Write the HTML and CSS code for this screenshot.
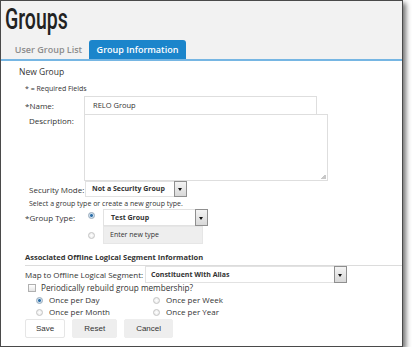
FILE: index.html
```html
<!DOCTYPE html>
<html lang="en">
<head>
    <meta charset="UTF-8">
    <title>Groups</title>
    <link rel="stylesheet" href="styles.css">
</head>
<body>
    <div class="window">
        <div class="header">
            <h1 class="title">Groups</h1>
            <div class="tabs">
                <span class="tab">User Group List</span>
                <span class="tab active">Group Information</span>
            </div>
        </div>
        <div class="rule"></div>

        <div class="content">
            <div class="subtitle">New Group</div>

            <div class="form">
                <div class="req">* = Required Fields</div>

                <div class="row name-row">
                    <span class="lbl">*Name:</span>
                    <div class="field name">RELO Group</div>
                </div>

                <div class="row desc-row">
                    <span class="lbl indent">Description:</span>
                    <div class="field desc"><span class="grip"></span></div>
                </div>

                <div class="row sec-row">
                    <span class="lbl indent">Security Mode:</span>
                    <div class="select sec"><span class="val">Not a Security Group</span><span class="arrow"></span></div>
                </div>
                <div class="hint">Select a group type or create a new group type.</div>

                <div class="row type-row">
                    <span class="lbl">*Group Type:</span>
                    <span class="radio on"></span>
                    <div class="select type"><span class="val">Test Group</span><span class="arrow"></span></div>
                </div>
                <div class="row new-row">
                    <span class="lbl"></span>
                    <span class="radio"></span>
                    <div class="field newtype">Enter new type</div>
                </div>

                <div class="section">Associated Offline Logical Segment Information</div>

                <div class="row map-row">
                    <span class="map-lbl">Map to Offline Logical Segment:</span>
                    <div class="select map"><span class="val">Constituent With Alias</span><span class="arrow"></span></div>
                </div>

                <div class="check-row">
                    <span class="box"></span>
                    <span>Periodically rebuild group membership?</span>
                </div>

                <div class="freq">
                    <div class="opt"><span class="radio on"></span>Once per Day</div>
                    <div class="opt"><span class="radio"></span>Once per Week</div>
                    <div class="opt"><span class="radio"></span>Once per Month</div>
                    <div class="opt"><span class="radio"></span>Once per Year</div>
                </div>

                <div class="buttons">
                    <button type="button" class="btn save">Save</button>
                    <button type="button" class="btn">Reset</button>
                    <button type="button" class="btn">Cancel</button>
                </div>
            </div>
        </div>
    </div>
</body>
</html>
```

FILE: styles.css
```css
body {
    margin: 0;
    background: #fff;
    font-family: "Open Sans", sans-serif;
    color: #333;
}

.window {
    width: 401px;
    height: 345px;
    border: 1px solid #4a4a4a;
    background: #fff;
    box-shadow: 3px 3px 5px rgba(0, 0, 0, 0.55);
    overflow: hidden;
    white-space: nowrap;
}

.header {
    background: #f2f2f2;
    height: 58px;
    display: flex;
    flex-direction: column;
    justify-content: space-between;
}

.title {
    margin: 0;
    padding: 3px 0 0 6px;
    font-family: Roboto, sans-serif;
    font-weight: 500;
    font-size: 30px;
    line-height: 30px;
    color: #222;
    transform: scaleX(0.65);
    transform-origin: left;
}

.tabs {
    display: flex;
    padding-left: 7px;
    height: 19px;
}

.tab {
    width: 81px;
    text-align: center;
    font-size: 9px;
    font-weight: 600;
    line-height: 19px;
    color: #8c8c8c;
}

.tab.active {
    width: 97px;
    background: #1b85cb;
    color: #fff;
    border-radius: 3px 3px 0 0;
}

.rule {
    height: 2px;
    background: #76b6e3;
}

.content {
    padding: 5px 0 0 18px;
}

.subtitle {
    font-size: 8.5px;
    line-height: 12px;
}

.form {
    padding-left: 6px;
}

.req {
    margin-top: 6px;
    font-size: 7px;
    line-height: 10px;
}

.row {
    display: flex;
    align-items: center;
}

.lbl {
    width: 59px;
    flex: none;
    font-size: 8px;
}

.lbl.indent {
    padding-left: 4px;
    width: 55px;
}

.field {
    box-sizing: border-box;
    border: 1px solid #dedede;
    background: #fff;
    font-size: 7.5px;
    padding-left: 8px;
}

.name-row {
    margin-top: 2px;
}

.name {
    width: 233px;
    height: 19px;
    line-height: 17px;
}

.desc-row {
    align-items: flex-start;
    margin-top: -1px;
}

.desc-row .lbl {
    padding-top: 1px;
}

.desc {
    width: 244px;
    height: 67px;
    position: relative;
}

.grip {
    position: absolute;
    right: 1px;
    bottom: 1px;
    width: 5px;
    height: 5px;
    background: linear-gradient(135deg, transparent 50%, #c8c8c8 50%);
}

.select {
    box-sizing: border-box;
    display: flex;
    border: 1px solid #e2e2e2;
    background: #fff;
    font-size: 7px;
    font-weight: 700;
    color: #333;
}

.select .val {
    flex: 1;
    padding-left: 6px;
}

.arrow {
    width: 11px;
    flex: none;
    border: 1px solid #8f8f8f;
    margin: -1px -1px -1px 0;
    background: linear-gradient(#f4f4f4, #d8d8d8);
    position: relative;
}

.arrow::after {
    content: "";
    position: absolute;
    left: 3px;
    top: 50%;
    margin-top: -1px;
    border-left: 2.5px solid transparent;
    border-right: 2.5px solid transparent;
    border-top: 3px solid #111;
}

.sec {
    width: 102px;
    height: 16px;
    line-height: 14px;
    margin-left: 1px;
}

.hint {
    padding-left: 4px;
    margin-top: 2px;
    font-size: 7px;
    line-height: 10px;
}

.radio {
    box-sizing: border-box;
    width: 7px;
    height: 7px;
    flex: none;
    border-radius: 50%;
    border: 1px solid #c4c4c4;
    background: radial-gradient(#fff, #e6e6e6);
}

.radio.on {
    border-color: #9ab;
    background: radial-gradient(#2d6fa8 35%, #cfe0ee 45%);
}

.row .radio {
    margin: 0 8px 0 4px;
}

.type-row {
    margin-top: 0;
    align-items: flex-start;
}

.type-row .lbl {
    margin-top: 3px;
}

.type-row .radio {
    margin-top: 3px;
}

.type {
    width: 105px;
    height: 17px;
    line-height: 15px;
}

.type .val {
    padding-left: 7px;
}

.newtype {
    width: 100px;
    height: 18px;
    line-height: 16px;
    background: #eeeeee;
    border-color: #e6e6e6;
    font-size: 7px;
    padding-left: 6px;
}

.section {
    margin-top: 8px;
    padding-bottom: 2px;
    border-bottom: 1px solid #dcdcdc;
    font-size: 7.5px;
    font-weight: 700;
    line-height: 11px;
}

.map-lbl {
    width: 120px;
    flex: none;
    font-size: 8px;
}

.map {
    width: 202px;
    height: 17px;
    line-height: 15px;
}

.map .val {
    padding-left: 5px;
}

.check-row {
    display: flex;
    align-items: center;
    padding-left: 3px;
    font-size: 8.2px;
    line-height: 9px;
}

.box {
    box-sizing: border-box;
    width: 8px;
    height: 8px;
    margin-right: 5px;
    border: 1px solid #b0b0b0;
    background: linear-gradient(#fff, #e4e4e4);
}

.freq {
    display: grid;
    grid-template-columns: 117px auto;
    padding-left: 11px;
    margin-top: 2px;
    font-size: 8px;
    line-height: 12px;
}

.opt {
    display: flex;
    align-items: center;
}

.opt .radio {
    margin-right: 6px;
}

.buttons {
    display: flex;
    gap: 7px;
    margin-top: 1px;
}

.btn {
    height: 19px;
    padding: 0 11px;
    border: 1px solid #eeeeee;
    border-radius: 2px;
    background: #eeeeee;
    font-family: "Liberation Sans", Arial, sans-serif;
    font-size: 8px;
    color: #333;
}

.btn.save {
    background: #fff;
    border-color: #e6e6e6;
    padding: 0 10px;
}
```
